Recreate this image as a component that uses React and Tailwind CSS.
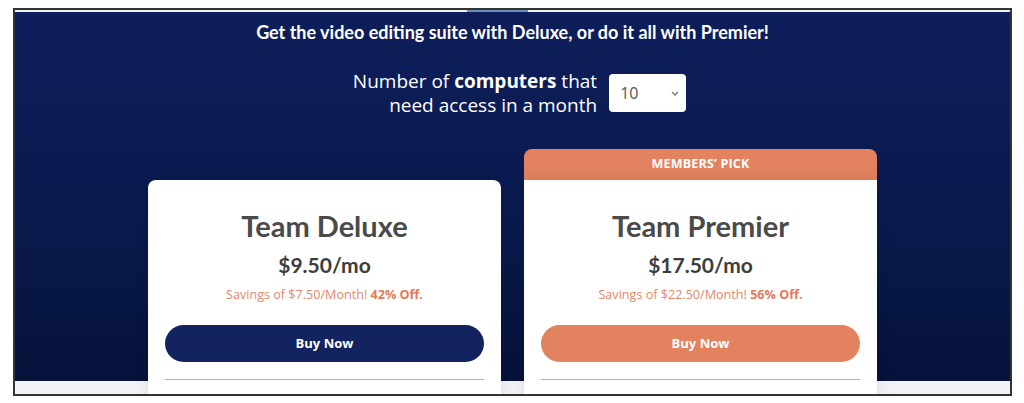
const PlanCard = ({ title, price, savings, off, buttonClass, pick }) => {
    return (
        <div className="w-[353px] flex flex-col">
            {pick && (
                <div className="h-[31px] bg-[#e2825f] rounded-t-[8px] flex items-center justify-center text-white font-bold text-[12.5px] tracking-[0.2px]">
                    MEMBERS’ PICK
                </div>
            )}
            <div
                className={`bg-white flex flex-col items-center px-[17px] pt-[28px] shadow-[0_0_14px_rgba(0,0,0,0.10)] ${
                    pick ? '' : 'rounded-t-[8px]'
                }`}
            >
                <h2 className="font-['Lato',sans-serif] font-bold text-[29px] leading-[36px] text-[#4a4a4a]">{title}</h2>
                <div className="mt-[7px] font-['Lato',sans-serif] font-bold text-[21px] leading-[28px] text-[#3d3d3d]">{price}</div>
                <div className="mt-[7px] text-[12.6px] leading-[18px] text-[#e3886b]">
                    {savings} <span className="font-bold text-[#e07a57]">{off}</span>
                </div>
                <button className={`mt-[21px] w-full h-[37px] rounded-full text-white font-bold text-[13px] ${buttonClass}`}>
                    Buy Now
                </button>
                <div className="mt-[17px] w-full h-px bg-[#a3b3d0]" />
                <div className="h-[40px]" />
            </div>
        </div>
    );
};

export default function App() {
    return (
        <div className="w-full h-[403px] bg-white font-['Open_Sans',sans-serif] pt-[8px]">
            {/* framed screenshot */}
            <div className="ml-[13px] w-[999px] h-[388px] border-2 border-[#333] overflow-hidden flex flex-col">
                {/* top tab strip */}
                <div className="h-[2px] bg-[#eef0f4] flex justify-center shrink-0">
                    <div className="w-[61px] h-full bg-[#6f8fc0] -ml-[30px]" />
                </div>

                <div className="flex-1 bg-[linear-gradient(180deg,#0e1e5b_0px,#0a1a4e_200px,#06123a_369px,#f2f3f6_369px)] flex flex-col items-center">
                    <h1 className="pt-[10px] font-['Lato',sans-serif] font-bold text-[18px] leading-[20px] text-white">
                        Get the video editing suite with Deluxe, or do it all with Premier!
                    </h1>

                    <div className="mt-[27px] flex items-center gap-[12px] pl-[14px]">
                        <p className="text-right text-white text-[19px] leading-[24px]">
                            Number of <span className="font-bold">computers</span> that
                            <br />
                            need access in a month
                        </p>
                        <div className="w-[77px] h-[38px] bg-white rounded-[4px] flex items-center justify-between pl-[11px] pr-[7px]">
                            <span className="text-[16px] text-[#555]">10</span>
                            <svg width="8" height="5" viewBox="0 0 8 5" fill="none" stroke="#777" strokeWidth="1.3">
                                <path d="M1 1l3 3 3-3" />
                            </svg>
                        </div>
                    </div>

                    <div className="mt-[32px] flex items-start gap-[23px]">
                        <div className="mt-[31px]">
                            <PlanCard
                                title="Team Deluxe"
                                price="$9.50/mo"
                                savings="Savings of $7.50/Month!"
                                off="42% Off."
                                buttonClass="bg-[#13235f]"
                            />
                        </div>
                        <PlanCard
                            pick
                            title="Team Premier"
                            price="$17.50/mo"
                            savings="Savings of $22.50/Month!"
                            off="56% Off."
                            buttonClass="bg-[#e2825f]"
                        />
                    </div>
                </div>
            </div>
        </div>
    );
}
